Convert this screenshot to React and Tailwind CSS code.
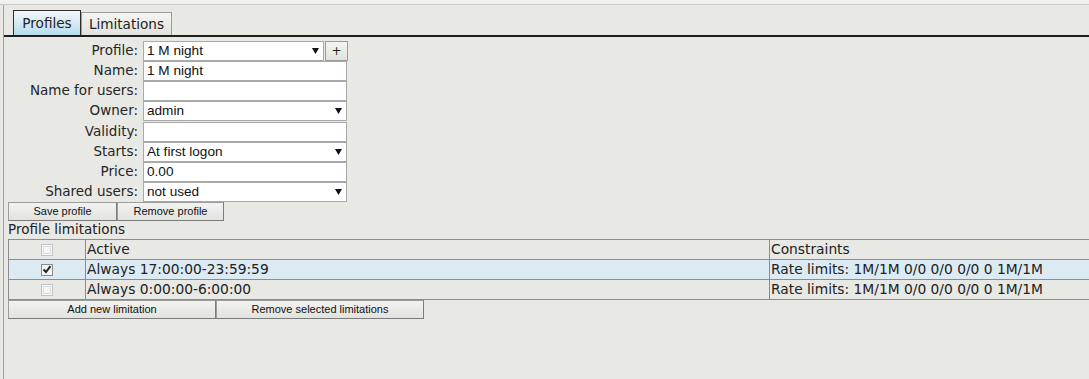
import React from 'react';

const FONT = { fontFamily: '"DejaVu Sans", Verdana, sans-serif' };

function Arrow() {
    return (
        <svg width="7" height="6" viewBox="0 0 7 6" className="shrink-0">
            <polygon points="0,0 7,0 3.5,6" fill="#111" />
        </svg>
    );
}

function Field({ label, value = '', select = false, width = 'w-[204px]', gap = false, children }) {
    return (
        <div className={`flex h-[20px] items-center ${gap ? 'mt-[1px]' : ''}`}>
            <div className="w-[139px] pr-[5px] text-right text-[13.5px] leading-none text-[#262626]">{label}</div>
            <div
                className={`flex h-[20px] ${width} items-center justify-between border border-[#a9a9a9] bg-white pr-[4px] pl-[3px] text-[13.6px] text-[#111]`}
                style={{ fontFamily: '"Liberation Sans", Arial, sans-serif' }}
            >
                <span>{value}</span>
                {select && <Arrow />}
            </div>
            {children}
        </div>
    );
}

function Checkbox({ checked = false }) {
    return (
        <span
            className={`flex h-[12px] w-[12px] items-center justify-center border ${
                checked ? 'border-[#8c8c8c] bg-[#f4f4f4]' : 'border-[#c4c4c4] bg-[#f6f6f6]'
            }`}
        >
            {checked ? (
                <svg width="10" height="9" viewBox="0 0 10 9">
                    <path d="M1.5 4.5 L4 7 L8.5 1.2" fill="none" stroke="#222" strokeWidth="2" />
                </svg>
            ) : (
                <span className="h-[8px] w-[8px] border border-[#dcdcdc]" />
            )}
        </span>
    );
}

function Btn({ w, children }) {
    return (
        <button
            className={`h-[19px] ${w} border border-[#9c9c9c] border-r-[#7c7c7c] border-b-[#7c7c7c] bg-linear-to-b from-[#f2f2f0] to-[#e2e2de] text-[11px] leading-none text-[#111]`}
            style={{ fontFamily: '"Liberation Sans", Arial, sans-serif' }}
        >
            {children}
        </button>
    );
}

const limitations = [
    { checked: true, active: 'Always 17:00:00-23:59:59', constraints: 'Rate limits: 1M/1M 0/0 0/0 0/0 0 1M/1M', selected: true },
    { checked: false, active: 'Always 0:00:00-6:00:00', constraints: 'Rate limits: 1M/1M 0/0 0/0 0/0 0 1M/1M', selected: false },
];

export default function App() {
    return (
        <div className="h-[379px] w-[1089px] overflow-hidden bg-[#e8e8e4] text-[#222]" style={FONT}>
            {/* top strip */}
            <div className="h-[5px] border-b border-[#c9c9c7] bg-[#f1f1ef]" />

            <div className="ml-[3px] h-[374px] border-l border-[#9e9e9e]">
                {/* tabs */}
                <div className="flex h-[30px] items-end pl-[9px]">
                    <div className="flex h-[25px] w-[68px] items-center justify-center border border-b-0 border-[#2e2e2e] bg-linear-to-b from-[#f3f8fb] to-[#b7dbec] text-[13.6px]">
                        Profiles
                    </div>
                    <div className="flex h-[23px] w-[91px] items-center justify-center border border-b-0 border-[#9a9a9a] bg-linear-to-b from-[#f5f5f3] to-[#e1e1dd] text-[13.6px]">
                        Limitations
                    </div>
                </div>
                <div className="h-[2px] bg-[#1e1e1e]" />

                {/* profile form */}
                <div className="pt-[4px]">
                    <Field label="Profile:" value="1 M night" select width="w-[181px]">
                        <div className="ml-[1px] flex h-[20px] w-[23px] items-center justify-center border border-[#9c9c9c] bg-linear-to-b from-[#f4f4f2] to-[#e2e2de] text-[12px] leading-none">
                            +
                        </div>
                    </Field>
                    <Field label="Name:" value="1 M night" />
                    <Field label="Name for users:" />
                    <Field label="Owner:" value="admin" select />
                    <Field label="Validity:" gap />
                    <Field label="Starts:" value="At first logon" select />
                    <Field label="Price:" value="0.00" />
                    <Field label="Shared users:" value="not used" select />
                </div>

                <div className="flex pl-[4px]">
                    <Btn w="w-[109px]">Save profile</Btn>
                    <Btn w="w-[107px]">Remove profile</Btn>
                </div>

                <div className="h-[18px] pl-[4px] text-[13.5px] leading-[17px]">Profile limitations</div>

                {/* limitations table */}
                <div className="ml-[4px] w-[1100px] border-t border-l border-[#8c8c8c] text-[13.8px] leading-none">
                    <div className="flex h-[20px] border-b border-[#8c8c8c]">
                        <div className="flex w-[77px] items-center justify-center border-r border-[#8c8c8c]">
                            <Checkbox />
                        </div>
                        <div className="flex w-[684px] items-center border-r border-[#8c8c8c] pl-[1px]">Active</div>
                        <div className="flex flex-1 items-center pl-[1px]">Constraints</div>
                    </div>
                    {limitations.map((row, i) => (
                        <div
                            key={i}
                            className={`flex h-[20px] border-b border-[#8c8c8c] ${row.selected ? 'bg-[#dcebf3]' : ''}`}
                        >
                            <div className="flex w-[77px] items-center justify-center border-r border-[#8c8c8c]">
                                <Checkbox checked={row.checked} />
                            </div>
                            <div className="flex w-[684px] items-center border-r border-[#8c8c8c] pl-[1px]">{row.active}</div>
                            <div className="flex flex-1 items-center pl-[1px]">{row.constraints}</div>
                        </div>
                    ))}
                </div>

                <div className="flex pl-[4px]">
                    <Btn w="w-[208px]">Add new limitation</Btn>
                    <Btn w="w-[208px]">Remove selected limitations</Btn>
                </div>
            </div>
        </div>
    );
}
